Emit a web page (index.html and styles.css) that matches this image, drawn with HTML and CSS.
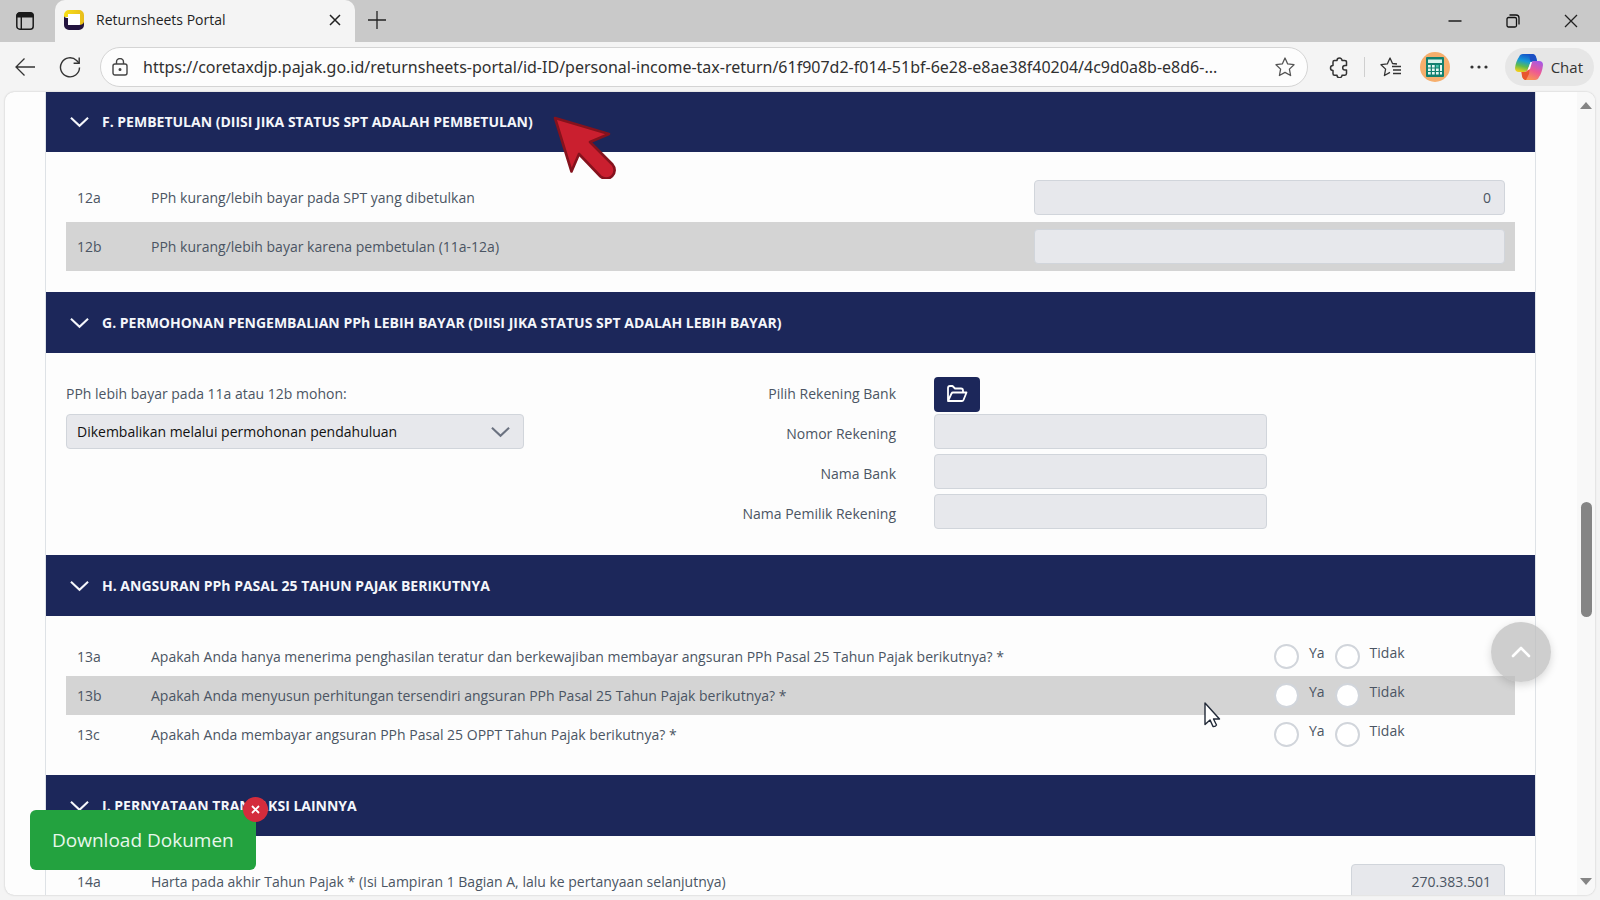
FILE: index.html
```html
<!DOCTYPE html>
<html lang="id">
<head>
<meta charset="utf-8">
<title>Returnsheets Portal</title>
<link rel="stylesheet" href="styles.css">
</head>
<body>
<header class="tabstrip">
  <button class="icon-btn tab-actions" aria-label="Tab actions">
    <svg width="20" height="20" viewBox="0 0 20 20"><rect x="1.8" y="1.8" width="16.4" height="16.4" rx="3" fill="none" stroke="#1a1a1a" stroke-width="1.5"/><path d="M1.5 6.6V4.5a3 3 0 0 1 3-3h11a3 3 0 0 1 3 3v2.1z" fill="#1a1a1a"/><path d="M6.3 6v12" stroke="#1a1a1a" stroke-width="1.4"/></svg>
  </button>
  <div class="tab">
    <svg width="22" height="22" viewBox="0 0 22 22"><defs><linearGradient id="y" x1="0" x2="1"><stop offset="0" stop-color="#f7e017"/><stop offset="1" stop-color="#e8bd1c"/></linearGradient></defs><rect x="4" y="4" width="14" height="14" fill="#fff"/><path d="M1 8V6a5 5 0 0 1 5-5h10a5 5 0 0 1 5 5v8q0 2.500-4 2.500V5H5v3z" fill="url(#y)"/><path d="M1 7q.5 2 4 2v7h11q4 0 5-3v3a5 5 0 0 1-5 5H6a5 5 0 0 1-5-5z" fill="#23143f"/></svg>
    <span class="tab-title">Returnsheets Portal</span>
    <button class="icon-btn" aria-label="Close tab"><svg width="12" height="12" viewBox="0 0 12 12"><path d="M1 1l10 10M11 1L1 11" stroke="#222" stroke-width="1.5"/></svg></button>
  </div>
  <button class="icon-btn new-tab" aria-label="New tab"><svg width="18" height="18" viewBox="0 0 18 18"><path d="M9 0v18M0 9h18" stroke="#222" stroke-width="1.3"/></svg></button>
  <div class="window-controls">
    <button class="icon-btn" aria-label="Minimize"><svg width="14" height="14" viewBox="0 0 14 14"><path d="M.5 7h13" stroke="#111" stroke-width="1.4"/></svg></button>
    <button class="icon-btn" aria-label="Restore"><svg width="14" height="14" viewBox="0 0 14 14" fill="none" stroke="#111" stroke-width="1.3"><rect x="1" y="3.500" width="9.500" height="9.500" rx="1.500"/><path d="M3.500 1h6.500a3 3 0 0 1 3 3v6.500"/></svg></button>
    <button class="icon-btn" aria-label="Close"><svg width="14" height="14" viewBox="0 0 14 14"><path d="M1 1l12 12M13 1L1 13" stroke="#222" stroke-width="1.3"/></svg></button>
  </div>
</header>

<nav class="toolbar">
  <button class="icon-btn" aria-label="Back"><svg width="20" height="20" viewBox="0 0 20 20" fill="none" stroke="#333" stroke-width="1.3"><path d="M20 10H1M9.500 1.500L1 10l8.500 8.500"/></svg></button>
  <button class="icon-btn reload" aria-label="Reload"><svg width="22" height="22" viewBox="0 0 22 22" fill="none" stroke="#333" stroke-width="1.400"><path d="M20.500 11.500A9.500 9.500 0 1 1 17.600 4.500L20 7"/><path d="M20.200 1.500V7.200H14.600"/></svg></button>
  <div class="address">
    <svg width="16" height="18" viewBox="0 0 16 18" fill="none" stroke="#444" stroke-width="1.400"><rect x="1" y="6" width="14" height="11" rx="2"/><path d="M4.500 6V4a3.500 3.500 0 0 1 7 0v2"/><circle cx="8" cy="11.500" r=".8" fill="#444"/></svg>
    <input class="url" aria-label="Address" value="https://coretaxdjp.pajak.go.id/returnsheets-portal/id-ID/personal-income-tax-return/61f907d2-f014-51bf-6e28-e8ae38f40204/4c9d0a8b-e8d6-...">
    <button class="icon-btn" aria-label="Favorite"><svg width="20" height="20" viewBox="0 0 20 20" fill="none" stroke="#555" stroke-width="1.300" stroke-linejoin="round"><path d="M10 1l2.700 5.900 6.300.8-4.600 4.400 1.200 6.400L10 15.400l-5.600 3.100 1.200-6.400L1 7.700l6.300-.8z"/></svg></button>
  </div>
  <div class="tools">
    <button class="icon-btn" aria-label="Extensions"><svg width="20" height="21" viewBox="0 0 20 21" fill="none" stroke="#333" stroke-width="1.500" stroke-linejoin="round"><path d="M4 5q0-1.500 1.500-1.500H8a2.500 2.500 0 0 1 5 0h2.500Q17.500 3.500 17.500 5v3.500H16a2.300 2.300 0 0 0 0 4.600h1.500v3.400q0 1.700-1.700 1.700H13a2.500 2.500 0 0 1-5 0H5.500Q4 18.200 4 16.700V13.500a2.500 2.500 0 0 1 0-5z"/></svg></button>
    <span class="divider"></span>
    <button class="icon-btn" aria-label="Favorites list"><svg width="21" height="20" viewBox="0 0 21 20" fill="none" stroke="#333" stroke-width="1.300" stroke-linejoin="round"><path d="M17 7l-4.500-.5L10 1 7.300 6.900 1 7.700l4.600 4.400-1.200 6.400L10 15.400"/><path d="M12 9.500h9M13 13h8M13 16.500h8"/></svg></button>
    <button class="icon-btn" aria-label="Profile"><svg width="30" height="30" viewBox="0 0 30 30"><circle cx="15" cy="15" r="15" fill="#f6ae6c"/><rect x="6" y="5" width="18" height="20" rx="1" fill="#12806f"/><rect x="8" y="7.500" width="14" height="3.500" fill="#d9f3ec"/><g fill="#e4f7f2"><path d="M8 13h2.700v2.500H8zM12 13h2.700v2.500H12zM8 16.500h2.700V19H8zM12 16.500h2.700V19H12zM16 16.500h2.700V19H16zM20 13h2v6h-2zM8 20h2.700v2.500H8zM12 20h2.700v2.500H12zM16 20h2.700v2.500H16zM20 20h2v2.500h-2z"/></g><path d="M16 13h2.700v2.500H16z" fill="#45c6ad"/></svg></button>
    <button class="icon-btn" aria-label="Menu"><svg width="20" height="4" viewBox="-1 0 20 4" fill="#333"><circle cx="2" cy="2" r="1.600"/><circle cx="9" cy="2" r="1.600"/><circle cx="16" cy="2" r="1.600"/></svg></button>
  </div>
  <button class="chat">
    <svg width="28" height="26" viewBox="0 0 28 26"><defs><linearGradient id="a" x1=".6" y1="0" x2=".3" y2="1"><stop offset="0" stop-color="#1450c8"/><stop offset=".4" stop-color="#159ad8"/><stop offset=".7" stop-color="#5fbb4c"/><stop offset="1" stop-color="#f0cf1b"/></linearGradient><linearGradient id="b" x1=".8" y1="0" x2=".3" y2="1"><stop offset="0" stop-color="#a659e6"/><stop offset=".5" stop-color="#ee5a93"/><stop offset="1" stop-color="#fb9a4b"/></linearGradient></defs><path d="M8 0h9q3 0 4 3l1 4h-3q-3 0-4 3l-2 5q-1 3-4 3H4q-4 0-4-4Q1 7 4 3 5 0 8 0z" fill="url(#a)"/><path d="M20 26h-9q-3 0-4-4l-1-4h3q3 0 4-3l2-5q1-3 4-3h5q4 0 4 4-1 8-4 12-1 3-4 3z" fill="url(#b)"/><path d="M15 0h2q3 0 4 3l1 4h-3q-2 0-3 1-2-3-1-8z" fill="#1c4fc4"/><path d="M7 18h3q3 0 4-3l1-2-1 7-2 4-1 2q-3 0-4-4z" fill="#e8552d"/><path d="M17 8h-1.500L12.500 16.500l2.500-1.500z" fill="#fff"/></svg>
    Chat
  </button>
</nav>

<div class="viewport">
  <main class="page">
    <section class="panel">
      <h2><button class="panel-head"><svg class="chev" viewBox="0 0 20 12"><path d="M1 1.500l9 8.500 9-8.500"/></svg>F. PEMBETULAN (DIISI JIKA STATUS SPT ADALAH PEMBETULAN)</button></h2>
      <div class="panel-body">
        <div class="row amount"><span>12a</span><label for="f12a">PPh kurang/lebih bayar pada SPT yang dibetulkan</label><input id="f12a" class="field num" value="0" readonly></div>
        <div class="row amount alt"><span>12b</span><label for="f12b">PPh kurang/lebih bayar karena pembetulan (11a-12a)</label><input id="f12b" class="field num" readonly></div>
      </div>
    </section>

    <section class="panel">
      <h2><button class="panel-head"><svg class="chev" viewBox="0 0 20 12"><path d="M1 1.500l9 8.500 9-8.500"/></svg>G. PERMOHONAN PENGEMBALIAN PPh LEBIH BAYAR (DIISI JIKA STATUS SPT ADALAH LEBIH BAYAR)</button></h2>
      <div class="panel-body refund">
        <label class="request-label" for="req">PPh lebih bayar pada 11a atau 12b mohon:</label>
        <div class="select-wrap">
          <select id="req" class="field"><option>Dikembalikan melalui permohonan pendahuluan</option></select>
          <svg class="chev" viewBox="0 0 20 12"><path d="M1 1.500l9 8.500 9-8.500"/></svg>
        </div>
        <label class="bank-label" for="pick">Pilih Rekening Bank</label>
        <button id="pick" class="pick"><svg width="22" height="18" viewBox="0 0 22 18" fill="none" stroke="#fff" stroke-width="1.800" stroke-linejoin="round"><path d="M2 16V3q0-2 2-2h2.500l2.500 2.500h6q2 0 2 2V7M2 16L5.500 8.500Q6 7.500 7 7.500h13.500L17.500 15q-.4 1-1.500 1z"/></svg></button>
        <label class="bank-label" for="norek">Nomor Rekening</label>
        <input id="norek" class="field bank" readonly>
        <label class="bank-label" for="bank">Nama Bank</label>
        <input id="bank" class="field bank" readonly>
        <label class="bank-label" for="owner">Nama Pemilik Rekening</label>
        <input id="owner" class="field bank" readonly>
      </div>
    </section>

    <section class="panel">
      <h2><button class="panel-head"><svg class="chev" viewBox="0 0 20 12"><path d="M1 1.500l9 8.500 9-8.500"/></svg>H. ANGSURAN PPh PASAL 25 TAHUN PAJAK BERIKUTNYA</button></h2>
      <div class="panel-body">
        <div class="row choice"><span>13a</span><span>Apakah Anda hanya menerima penghasilan teratur dan berkewajiban membayar angsuran PPh Pasal 25 Tahun Pajak berikutnya? *</span>
          <div class="radios"><input type="radio" name="q13a" id="a1"><label for="a1">Ya</label><input type="radio" name="q13a" id="a2"><label for="a2">Tidak</label></div></div>
        <div class="row choice alt"><span>13b</span><span>Apakah Anda menyusun perhitungan tersendiri angsuran PPh Pasal 25 Tahun Pajak berikutnya? *</span>
          <div class="radios"><input type="radio" name="q13b" id="b1"><label for="b1">Ya</label><input type="radio" name="q13b" id="b2"><label for="b2">Tidak</label></div></div>
        <div class="row choice"><span>13c</span><span>Apakah Anda membayar angsuran PPh Pasal 25 OPPT Tahun Pajak berikutnya? *</span>
          <div class="radios"><input type="radio" name="q13c" id="c1"><label for="c1">Ya</label><input type="radio" name="q13c" id="c2"><label for="c2">Tidak</label></div></div>
      </div>
    </section>

    <section class="panel">
      <h2><button class="panel-head"><svg class="chev" viewBox="0 0 20 12"><path d="M1 1.500l9 8.500 9-8.500"/></svg>I. PERNYATAAN TRANSAKSI LAINNYA</button></h2>
      <div class="panel-body">
        <div class="row total"><span>14a</span><label for="f14a">Harta pada akhir Tahun Pajak * (Isi Lampiran 1 Bagian A, lalu ke pertanyaan selanjutnya)</label><input id="f14a" class="field num" value="270.383.501" readonly></div>
      </div>
    </section>
  </main>

  <div class="scrollbar">
    <svg width="12" height="7" viewBox="0 0 12 7"><path d="M6 0l6 7H0z" fill="#858585"/></svg>
    <div class="track"><div class="thumb"></div></div>
    <svg width="12" height="7" viewBox="0 0 12 7"><path d="M0 0h12L6 7z" fill="#858585"/></svg>
  </div>

  <button class="to-top" aria-label="Ke atas"><svg width="20" height="12" viewBox="0 0 20 12"><path d="M2 10l8-8 8 8" fill="none" stroke="#fff" stroke-width="2.600" stroke-linecap="round" stroke-linejoin="round"/></svg></button>

  <div class="download">
    <button class="download-btn">Download Dokumen</button>
    <button class="dismiss" aria-label="Tutup"><svg width="9" height="9" viewBox="0 0 9 9"><path d="M1 1l7 7M8 1L1 8" stroke="#fff" stroke-width="1.800"/></svg></button>
  </div>

  <svg class="pointer-mark" width="64" height="64" viewBox="0 0 64 64"><path d="M3 3L57 19 38 27 60.500 49.500A8.500 8.500 0 0 1 48.500 61.500L27 39 19.500 56.500z" fill="#ca1f2f" stroke="#85121d" stroke-width="2.600" stroke-linejoin="round"/></svg>
  <svg class="mouse" width="17" height="26" viewBox="0 0 17 26"><path d="M1 1v21.500l5-4.600 3 6.600q2.500.3 3.500-1.500l-3-6h6z" fill="#fff" stroke="#222a38" stroke-width="1.400" stroke-linejoin="round"/></svg>
</div>
</body>
</html>
```

FILE: styles.css
```css
* { box-sizing: border-box; }

body {
  margin: 0;
  height: 100vh;
  display: flex;
  flex-direction: column;
  overflow: hidden;
  background: #f4f4f4;
  color: #4b5563;
  font-family: "Open Sans", "Noto Sans", sans-serif;
  font-size: 14px;
  line-height: 20px;
}

button, input, select { font: inherit; color: inherit; margin: 0; }

button { border: 0; padding: 0; background: none; }

svg { display: block; flex: none; }

.icon-btn { display: flex; align-items: center; justify-content: center; }

/* Tab strip */
.tabstrip {
  display: flex;
  flex: none;
  height: 42px;
  background: #c9c9c9;
}

.tab-actions { width: 55px; padding-right: 5px; }

.tab {
  display: flex;
  align-items: center;
  gap: 11px;
  width: 300px;
  padding: 0 14px 2px 8px;
  border-radius: 10px 10px 0 0;
  background: #f4f4f4;
  color: #1f1f1f;
}

.tab-title { flex: 1; }

.new-tab { padding: 0 13px 2px; }

.window-controls { display: flex; gap: 44px; margin-left: auto; padding-right: 22px; }

/* Toolbar */
.toolbar {
  display: flex;
  flex: none;
  align-items: center;
  height: 50px;
  padding: 0 6px 0 15px;
}

.reload { margin: 0 19px 0 24px; }

.address {
  display: flex;
  flex: 1;
  align-items: center;
  gap: 15px;
  min-width: 0;
  height: 40px;
  padding: 0 12px 0 11px;
  border: 1px solid #d4d4d4;
  border-radius: 20px;
  background: #fdfdfd;
}

.url {
  flex: 1;
  min-width: 0;
  padding: 0;
  border: 0;
  outline: 0;
  background: none;
  color: #303030;
  font-family: "Noto Sans", sans-serif;
  font-size: 16px;
}

.tools { display: flex; align-items: center; gap: 19px; padding: 0 16px 0 21px; }

.divider { width: 1px; height: 20px; margin: 0 -4px; background: #cfcfcf; }

.chat {
  display: flex;
  align-items: center;
  gap: 8px;
  height: 38px;
  padding: 0 11px 0 10px;
  border-radius: 19px;
  background: #e6e6e6;
  color: #333;
  font-size: 15px;
}

/* Page area */
.viewport {
  position: relative;
  display: flex;
  flex: 1;
  min-height: 0;
  margin: 0 5px 5px;
  overflow: hidden;
  border-radius: 9px;
  background: #fdfdfd;
  box-shadow: 0 0 2px #bbb;
}

.page { flex: 1; min-width: 0; margin: -1px 41px 0 40px; }

.panel { border: solid #dee2e6; border-width: 0 1px; }

h2 { margin: 0; font-size: 14px; line-height: 20px; }

.panel-head {
  display: flex;
  align-items: center;
  gap: 13px;
  width: 100%;
  height: 61px;
  padding: 0 24px;
  background: #1c275a;
  color: #f4f6fb;
  font-weight: 700;
  text-align: left;
}

.chev { width: 19px; height: 12px; fill: none; stroke: currentColor; stroke-width: 2.2; }

.panel-body { padding: 21px 20px; }

.row {
  display: grid;
  grid-template-columns: 74px minmax(0, 1fr) 33%;
  align-items: center;
  min-height: 49px;
  padding: 0 10px 0 11px;
}

.choice { grid-template-columns: 74px minmax(0, 1fr) 231px; min-height: 39px; }

.total { grid-template-columns: 74px minmax(0, 1fr) 154px; }

.alt { background: #d4d4d4; }

.field {
  width: 100%;
  height: 35px;
  padding: 0 13px;
  border: 1px solid #d1d5db;
  border-radius: 4px;
  background: #e7e8ec;
}

.num { text-align: right; }

/* Refund form */
.refund {
  display: grid;
  grid-template-columns: 458fr 410fr 333fr 248fr;
  grid-auto-rows: 40px;
}

.request-label { grid-area: 1 / 1; align-self: center; }

.select-wrap { position: relative; grid-area: 2 / 1; }

.select-wrap .field { appearance: none; padding: 0 10px; color: #111; opacity: 1; }

.select-wrap .chev { position: absolute; top: 12px; right: 14px; color: #6b7280; pointer-events: none; }

.bank-label { grid-column: 2; align-self: center; padding-right: 38px; text-align: right; }

.pick {
  display: flex;
  align-items: center;
  justify-content: center;
  grid-area: 1 / 3;
  align-self: center;
  width: 46px;
  height: 35px;
  border-radius: 4px;
  background: #1c275a;
}

.bank { grid-column: 3; }

/* Radio choices */
.radios { display: flex; align-items: center; }

.radios input {
  appearance: none;
  width: 25px;
  height: 25px;
  border: 2px solid #d1d5db;
  border-radius: 50%;
  background: #fff;
}

.radios label { padding: 0 10px 8px 10px; }

/* Scrollbar */
.scrollbar {
  display: flex;
  flex-direction: column;
  align-items: center;
  gap: 8px;
  width: 18px;
  padding: 10px 0;
  background: #f8f8f8;
}

.track { display: flex; flex: 1; flex-direction: column; padding-top: 385px; }

.thumb { width: 11px; height: 115px; border-radius: 6px; background: #858585; }

/* Overlays */
.to-top {
  position: absolute;
  right: 44px;
  bottom: 213px;
  display: flex;
  align-items: center;
  justify-content: center;
  width: 60px;
  height: 60px;
  border-radius: 50%;
  background: rgba(190, 190, 190, 0.75);
  box-shadow: 0 3px 8px rgba(0, 0, 0, 0.15);
}

.download { position: absolute; left: 25px; bottom: 25px; }

.download-btn {
  height: 60px;
  padding: 0 22px;
  border-radius: 6px;
  background: #23a23f;
  color: #e8f7eb;
  font-size: 19px;
}

.dismiss {
  position: absolute;
  top: -13px;
  right: -12px;
  display: flex;
  align-items: center;
  justify-content: center;
  width: 25px;
  height: 25px;
  border-radius: 50%;
  background: #d42c3c;
}

.pointer-mark { position: absolute; left: 547px; top: 23px; }

.mouse { position: absolute; left: 1199px; top: 610px; }
```
